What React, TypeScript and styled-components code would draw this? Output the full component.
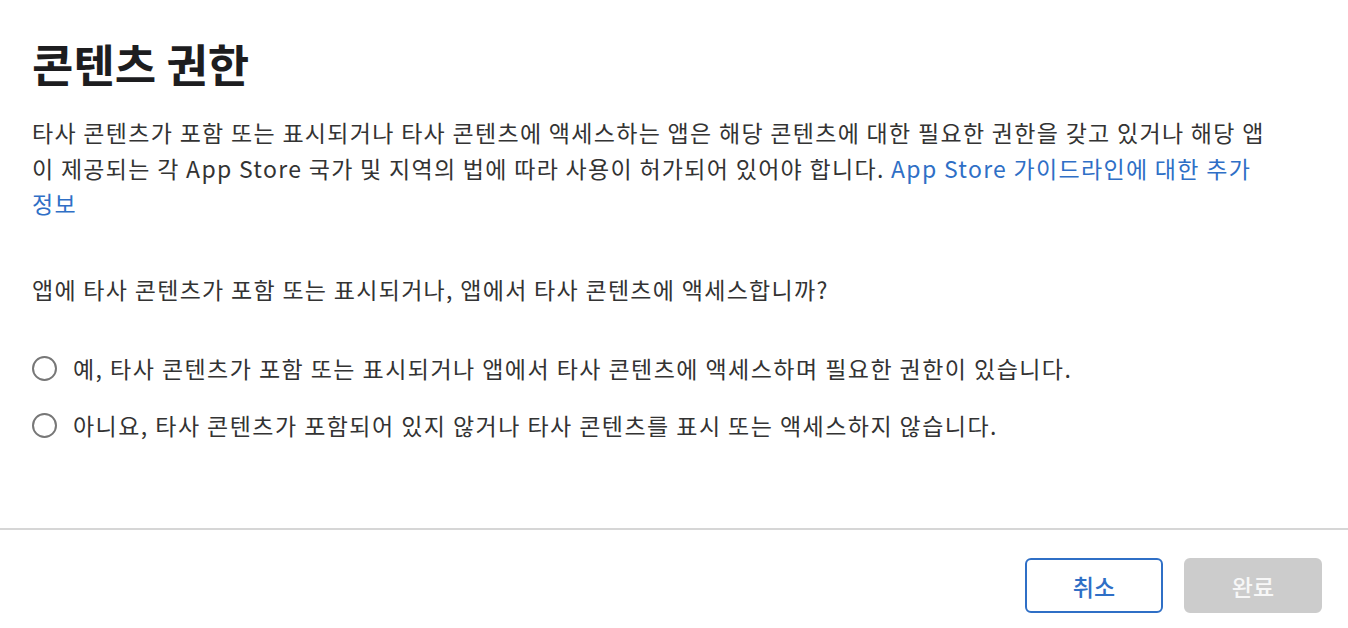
import styled, { createGlobalStyle } from "styled-components";

const GlobalStyle = createGlobalStyle`
  html, body {
    margin: 0;
    padding: 0;
    background: #ffffff;
  }
  body {
    font-family: "Noto Sans CJK KR", "Noto Sans", "Liberation Sans", sans-serif;
    color: #333333;
  }
`;

const Page = styled.div`
  display: flex;
  flex-direction: column;
  min-height: 628px;
  width: 1348px;
  box-sizing: border-box;
`;

const Content = styled.div`
  flex: 1;
  padding: 0 32px;
`;

const Title = styled.h1`
  margin: 39px 0 0;
  font-size: 45px;
  line-height: 50px;
  font-weight: 700;
  color: #1d1d1f;
`;

const Description = styled.p`
  margin: 26px 0 0;
  font-size: 23px;
  line-height: 35.5px;
  letter-spacing: 1.3px;
  max-width: 1244px;
`;

const Link = styled.a`
  color: #2f6fc6;
  text-decoration: none;
`;

const Question = styled.p`
  margin: 50px 0 0;
  font-size: 23px;
  line-height: 35.5px;
  letter-spacing: 1.3px;
`;

const Options = styled.div`
  display: flex;
  flex-direction: column;
  gap: 21px;
  margin-top: 43px;
`;

const Option = styled.label`
  display: flex;
  align-items: center;
  gap: 16px;
  height: 36px;
  font-size: 23px;
  letter-spacing: 1.45px;
  cursor: pointer;
`;

const Radio = styled.span`
  width: 25px;
  height: 25px;
  box-sizing: border-box;
  border: 2px solid #777777;
  border-radius: 50%;
  flex-shrink: 0;
`;

const Footer = styled.div`
  border-top: 2px solid #d6d6d6;
  display: flex;
  justify-content: flex-end;
  gap: 21px;
  padding: 28px 26px 15px;
`;

const Button = styled.button<{ $primary?: boolean }>`
  width: 138px;
  height: 55px;
  box-sizing: border-box;
  border-radius: 6px;
  font-family: inherit;
  font-size: 23px;
  font-weight: 500;
  cursor: pointer;
  border: 2px solid ${(p) => (p.$primary ? "#cccccc" : "#2f6fc6")};
  background: ${(p) => (p.$primary ? "#cccccc" : "#ffffff")};
  color: ${(p) => (p.$primary ? "#f7f7f7" : "#2f6fc6")};
`;

const options = [
  "예, 타사 콘텐츠가 포함 또는 표시되거나 앱에서 타사 콘텐츠에 액세스하며 필요한 권한이 있습니다.",
  "아니요, 타사 콘텐츠가 포함되어 있지 않거나 타사 콘텐츠를 표시 또는 액세스하지 않습니다.",
];

export default function App() {
  return (
    <>
      <GlobalStyle />
      <Page>
        <Content>
          <Title>콘텐츠 권한</Title>
          <Description>
            타사 콘텐츠가 포함 또는 표시되거나 타사 콘텐츠에 액세스하는 앱은 해당 콘텐츠에 대한 필요한 권한을 갖고 있거나 해당 앱이 제공되는 각 App Store 국가 및 지역의 법에 따라 사용이 허가되어 있어야 합니다.{" "}
            <Link href="#">App Store 가이드라인에 대한 추가 정보</Link>
          </Description>
          <Question>
            앱에 타사 콘텐츠가 포함 또는 표시되거나, 앱에서 타사 콘텐츠에 액세스합니까?
          </Question>
          <Options>
            {options.map((text) => (
              <Option key={text}>
                <Radio />
                {text}
              </Option>
            ))}
          </Options>
        </Content>
        <Footer>
          <Button>취소</Button>
          <Button $primary disabled>
            완료
          </Button>
        </Footer>
      </Page>
    </>
  );
}
